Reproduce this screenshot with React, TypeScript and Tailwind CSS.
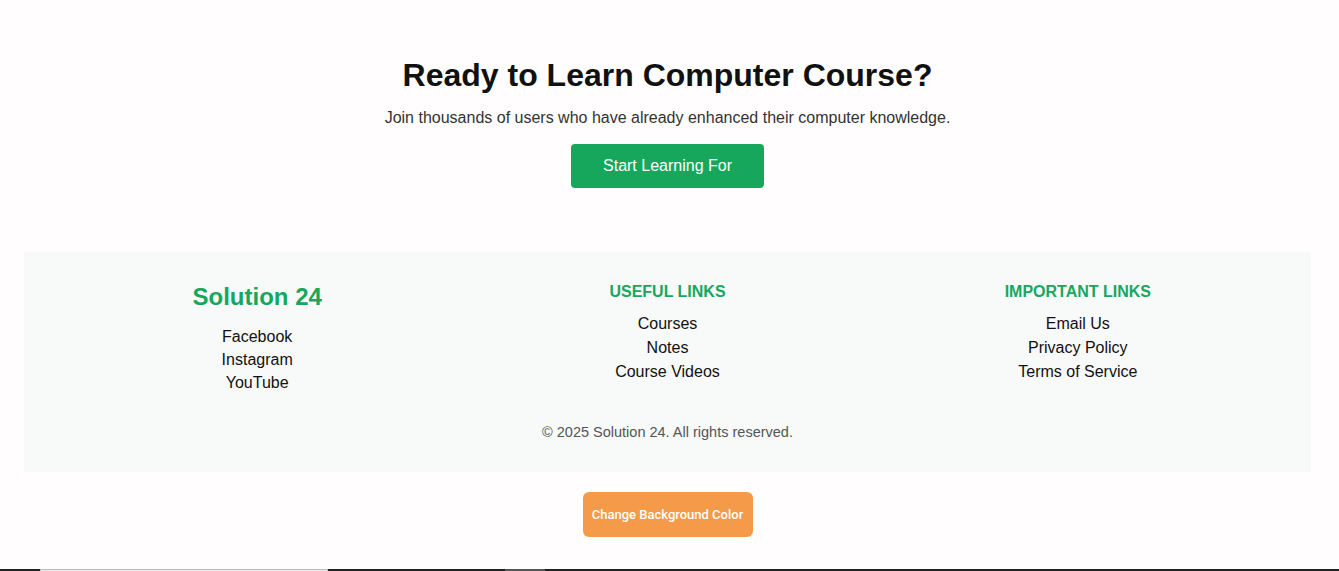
import React from 'react';

const useful = ['Courses', 'Notes', 'Course Videos'];
const important = ['Email Us', 'Privacy Policy', 'Terms of Service'];
const social = ['Facebook', 'Instagram', 'YouTube'];

export default function App() {
  return (
    <div className="min-h-screen bg-[#fffdfd] text-[#111] font-['Liberation_Sans',Arial,sans-serif]">
      <div className="mr-1">
        {/* call to action */}
        <section className="pt-[57px] flex flex-col items-center text-center">
          <h1 className="text-[32px] leading-[37px] font-bold text-[#111]">Ready to Learn Computer Course?</h1>
          <p className="mt-[15px] text-base leading-[18px] text-[#333]">
            Join thousands of users who have already enhanced their computer knowledge.
          </p>
          <button className="mt-[17px] w-[193px] py-3 text-base leading-5 text-white bg-[#16a75c] rounded">
            Start Learning For
          </button>
        </section>

        {/* footer */}
        <footer className="mt-16 mx-6 bg-[#f8f9f9] pt-[31px] pb-[31px]">
          <div className="grid grid-cols-3 gap-6 px-10 text-center">
            <div>
              <h2 className="text-2xl leading-7 font-bold text-[#16a75c]">Solution 24</h2>
              <ul className="mt-[14px]">
                {social.map((s) => (
                  <li key={s} className="text-base leading-[23px]">{s}</li>
                ))}
              </ul>
            </div>
            <div>
              <h3 className="text-base leading-[18px] font-bold uppercase text-[#16a75c]">Useful Links</h3>
              <ul className="mt-[11px]">
                {useful.map((s) => (
                  <li key={s} className="text-base leading-6">{s}</li>
                ))}
              </ul>
            </div>
            <div>
              <h3 className="text-base leading-[18px] font-bold uppercase text-[#16a75c]">Important Links</h3>
              <ul className="mt-[11px]">
                {important.map((s) => (
                  <li key={s} className="text-base leading-6">{s}</li>
                ))}
              </ul>
            </div>
          </div>
          <p className="mt-[30px] text-center text-[14.5px] leading-[17px] text-[#555]">
            © 2025 Solution 24. All rights reserved.
          </p>
        </footer>

        <div className="flex justify-center mt-5">
          <button className="w-[170px] py-[14px] rounded-md bg-[#f49a48] text-white text-[13px] leading-[17px] font-medium font-['Roboto',sans-serif]">
            Change Background Color
          </button>
        </div>
      </div>

      {/* next section peeking in at the bottom */}
      <div className="mt-8 h-10 bg-[#222] flex">
        <div className="ml-10 w-[288px] h-full bg-[#ececec] border border-[#bbb]" />
        <div className="ml-[177px] w-10 h-full bg-[#555]" />
      </div>
    </div>
  );
}
